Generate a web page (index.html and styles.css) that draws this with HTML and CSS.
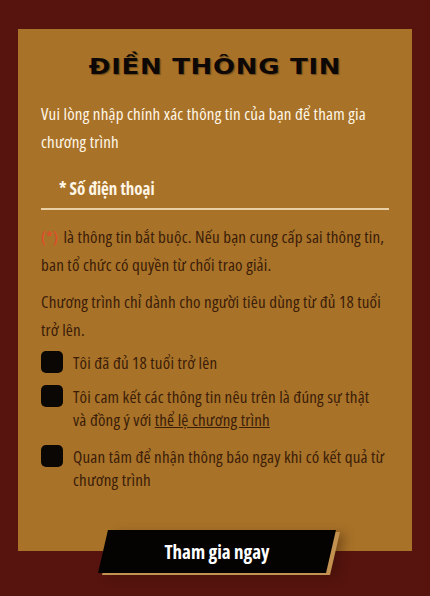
FILE: index.html
```html
<!DOCTYPE html>
<html lang="vi">
<head>
    <meta charset="UTF-8">
    <meta name="viewport" content="width=device-width, initial-scale=1.0">
    <title>Điền thông tin</title>
    <link rel="stylesheet" href="styles.css">
</head>
<body>
    <form class="page" onsubmit="return false">
        <div class="card">
            <h1 class="title"><span>ĐIỀN THÔNG TIN</span></h1>
            <p class="intro">Vui lòng nhập chính xác thông tin của bạn để tham gia chương trình</p>

            <label class="field">
                <input type="tel" placeholder="* Số điện thoại">
            </label>

            <p class="note"><span class="req">(*)</span> là thông tin bắt buộc. Nếu bạn cung cấp sai thông tin, ban tổ chức có quyền từ chối trao giải.</p>
            <p class="note note-age">Chương trình chỉ dành cho người tiêu dùng từ đủ 18 tuổi trở lên.</p>

            <div class="checks">
                <label class="check">
                    <input type="checkbox">
                    <span class="box"></span>
                    <span class="check-text">Tôi đã đủ 18 tuổi trở lên</span>
                </label>
                <label class="check">
                    <input type="checkbox">
                    <span class="box"></span>
                    <span class="check-text">Tôi cam kết các thông tin nêu trên là đúng sự thật và&nbsp;đồng ý với <a href="#">thể lệ chương trình</a></span>
                </label>
                <label class="check check-last">
                    <input type="checkbox">
                    <span class="box"></span>
                    <span class="check-text">Quan tâm để nhận thông báo ngay khi có kết quả từ chương trình</span>
                </label>
            </div>
        </div>

        <div class="actions">
            <button type="submit" class="submit"><span>Tham gia ngay</span></button>
        </div>
    </form>
</body>
</html>
```

FILE: styles.css
```css
* {
    box-sizing: border-box;
    margin: 0;
    padding: 0;
}

body {
    background: #57140e;
    font-family: 'Open Sans', 'Liberation Sans', sans-serif;
    font-stretch: condensed;
}

.page {
    display: block;
    padding: 29px 18px 23px;
}

.card {
    background: #a87228;
    padding: 23px 23px 60px;
}

/* wide bold heading */
.title {
    text-align: center;
    font-family: 'DejaVu Sans', sans-serif;
    font-stretch: normal;
    font-weight: bold;
    font-size: 22px;
    line-height: 30px;
    height: 30px;
    margin-bottom: 18px;
    color: #0d0805;
}

.title span {
    display: inline-block;
    letter-spacing: 0.6px;
    text-shadow: 1px 1px 1px rgba(0, 0, 0, 0.35);
    transform: scaleX(1.18);
}

.intro {
    color: #fff6e6;
    font-size: 17px;
    letter-spacing: 0.2px;
    line-height: 28px;
}

.field {
    display: block;
    margin-top: 22px;
    border-bottom: 2px solid #e9cfa6;
}

.field input {
    display: block;
    width: 100%;
    background: transparent;
    border: none;
    outline: none;
    font-family: inherit;
    font-stretch: condensed;
    font-weight: bold;
    font-size: 17px;
    line-height: 22px;
    color: #fff6e6;
    padding: 0 18px 8px;
}

.field input::placeholder {
    color: #fff6e6;
    opacity: 1;
}

.note {
    color: #3b1d08;
    font-size: 17px;
    letter-spacing: 0.2px;
    line-height: 28px;
    margin-top: 13px;
}

.note-age {
    margin-top: 9px;
}

.req {
    color: #e5492a;
    margin-right: 2px;
}

.checks {
    margin-top: 7px;
    display: flex;
    flex-direction: column;
    gap: 11px;
}

.check {
    display: flex;
    align-items: flex-start;
    gap: 10px;
    color: #3b1d08;
    font-size: 17px;
    letter-spacing: 0.2px;
    line-height: 23px;
    cursor: pointer;
}

.check-last {
    margin-top: 3px;
}

.check input {
    display: none;
}

.box {
    flex: none;
    width: 22px;
    height: 22px;
    border-radius: 5px;
    background: #0b0705;
}

.check input:checked + .box {
    box-shadow: inset 0 0 0 6px #0b0705, inset 0 0 0 11px #e9cfa6;
}

.check-text a {
    color: #3b1d08;
}

/* button sits across the bottom edge of the card */
.actions {
    position: relative;
    display: flex;
    justify-content: center;
    margin-top: -21px;
}

/* slanted black button with a tan edge */
.submit {
    position: relative;
    width: 228px;
    height: 43px;
    border: none;
    background: transparent;
    cursor: pointer;
    margin-left: 4px;
}

.submit::before,
.submit::after {
    content: '';
    position: absolute;
    inset: 0;
    transform: skewX(-13deg);
}

.submit::before {
    background: #c39150;
    top: 2px;
    left: 4px;
    right: -4px;
    bottom: -2px;
    box-shadow: 6px 2px 10px rgba(40, 15, 0, 0.35);
}

.submit::after {
    background: #050302;
}

.submit span {
    position: relative;
    z-index: 1;
    color: #fff;
    font-family: 'Open Sans', sans-serif;
    font-stretch: condensed;
    font-weight: bold;
    font-size: 19px;
}
```
